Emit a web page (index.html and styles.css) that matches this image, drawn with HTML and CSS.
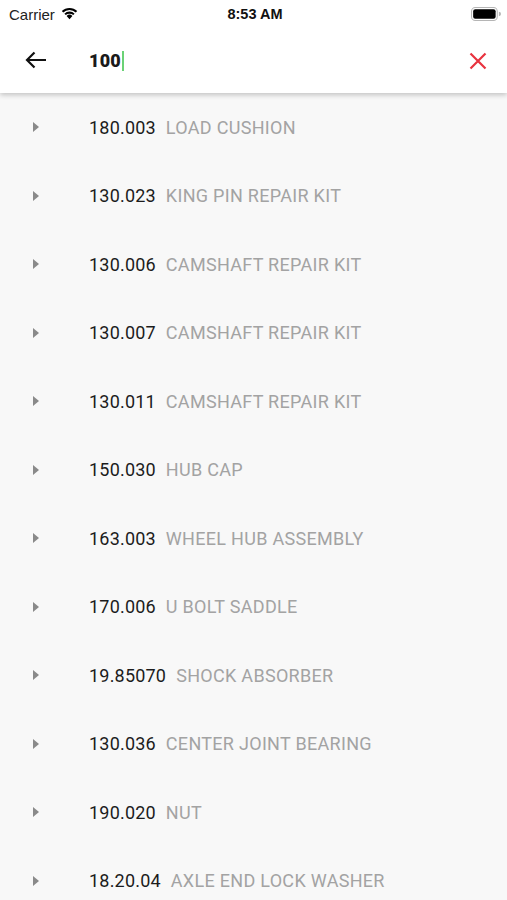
FILE: index.html
```html
<!DOCTYPE html>
<html>
<head>
<meta charset="utf-8">
<link rel="stylesheet" href="styles.css">
</head>
<body>
<div class="screen">
  <header class="top">
    <div class="status">
      <div class="status-left">
        <span class="carrier">Carrier</span>
        <svg class="wifi" width="19" height="14" viewBox="0 0 17 12"><path d="M8.5 11.5 L5.9 8.7 A3.7 3.7 0 0 1 11.1 8.7 Z" fill="#000"/><path d="M3.9 6.6 A6.6 6.6 0 0 1 13.1 6.6 L11.8 7.9 A4.8 4.8 0 0 0 5.2 7.9 Z" fill="#000"/><path d="M1.6 4.3 A9.8 9.8 0 0 1 15.4 4.3 L14.1 5.6 A8 8 0 0 0 2.9 5.6 Z" fill="#000"/></svg>
      </div>
      <span class="time">8:53 AM</span>
      <div class="status-right">
        <svg width="30" height="14" viewBox="0 0 28 13"><rect x="0.5" y="0.5" width="24" height="12" rx="3.5" fill="none" stroke="#b5b5b5"/><rect x="2" y="2" width="21" height="9" rx="2" fill="#000"/><path d="M26 4.5 a1.8 1.8 0 0 1 0 4 z" fill="#b5b5b5"/></svg>
      </div>
    </div>
    <div class="searchbar">
      <svg class="back" width="22" height="18" viewBox="0 0 22 18"><path d="M21 9 H2 M9.5 1.5 L2 9 L9.5 16.5" fill="none" stroke="#111" stroke-width="2.2"/></svg>
      <div class="query">100<span class="caret"></span></div>
      <svg class="clear" width="18" height="18" viewBox="0 0 18 18"><path d="M1.5 1.5 L16.5 16.5 M16.5 1.5 L1.5 16.5" stroke="#e8333f" stroke-width="2.2"/></svg>
    </div>
  </header>
  <ul class="list">
    <li class="row"><span class="tri"></span><span class="code">180.003</span><span class="name">LOAD CUSHION</span></li>
    <li class="row"><span class="tri"></span><span class="code">130.023</span><span class="name">KING PIN REPAIR KIT</span></li>
    <li class="row"><span class="tri"></span><span class="code">130.006</span><span class="name">CAMSHAFT REPAIR KIT</span></li>
    <li class="row"><span class="tri"></span><span class="code">130.007</span><span class="name">CAMSHAFT REPAIR KIT</span></li>
    <li class="row"><span class="tri"></span><span class="code">130.011</span><span class="name">CAMSHAFT REPAIR KIT</span></li>
    <li class="row"><span class="tri"></span><span class="code">150.030</span><span class="name">HUB CAP</span></li>
    <li class="row"><span class="tri"></span><span class="code">163.003</span><span class="name">WHEEL HUB ASSEMBLY</span></li>
    <li class="row"><span class="tri"></span><span class="code">170.006</span><span class="name">U BOLT SADDLE</span></li>
    <li class="row"><span class="tri"></span><span class="code">19.85070</span><span class="name">SHOCK ABSORBER</span></li>
    <li class="row"><span class="tri"></span><span class="code">130.036</span><span class="name">CENTER JOINT BEARING</span></li>
    <li class="row"><span class="tri"></span><span class="code">190.020</span><span class="name">NUT</span></li>
    <li class="row"><span class="tri"></span><span class="code">18.20.04</span><span class="name">AXLE END LOCK WASHER</span></li>
  </ul>
</div>
</body>
</html>
```
FILE: styles.css
```css
* { box-sizing: border-box; }
html, body { margin: 0; padding: 0; }
body { background: #f8f8f8; font-family: "Roboto", "Liberation Sans", sans-serif; overflow: hidden; }
.screen { width: 507px; height: 900px; overflow: hidden; }
.top { background: #fff; box-shadow: 0 2px 5px rgba(0,0,0,0.22); position: relative; z-index: 2; }
.status { height: 28px; display: flex; align-items: center; justify-content: space-between; padding: 0 6px 0 9px; font-family: "Liberation Sans", sans-serif; font-size: 15px; color: #000; }
.status-left { display: flex; align-items: center; gap: 5px; width: 120px; color: #222; }
.status-left .wifi { margin-top: -3px; }
.time { font-weight: bold; font-size: 14.5px; color: #111; }
.status-right { width: 120px; display: flex; justify-content: flex-end; }
.searchbar { height: 65px; display: flex; align-items: center; padding: 0 20px 0 25px; }
.back { flex: none; margin-top: -1px; }
.query { flex: 1; margin-left: 42px; font-weight: 900; font-size: 18px; color: #1a1a1a; display: flex; align-items: center; letter-spacing: 0.2px; }
.caret { display: inline-block; flex: none; width: 2px; height: 20px; background: #6ad276; margin-left: 1px; }
.clear { flex: none; }
.list { list-style: none; margin: 0; padding: 0; }
.row { height: 68.5px; display: flex; align-items: center; padding-left: 33px; font-size: 18px; }
.tri { width: 0; height: 0; border-top: 5px solid transparent; border-bottom: 5px solid transparent; border-left: 6px solid #8a8a8a; margin-right: 50px; }
.code { color: #1c1c1c; letter-spacing: 0.2px; }
.name { color: #a3a3a3; margin-left: 10px; letter-spacing: 0.3px; }
```
